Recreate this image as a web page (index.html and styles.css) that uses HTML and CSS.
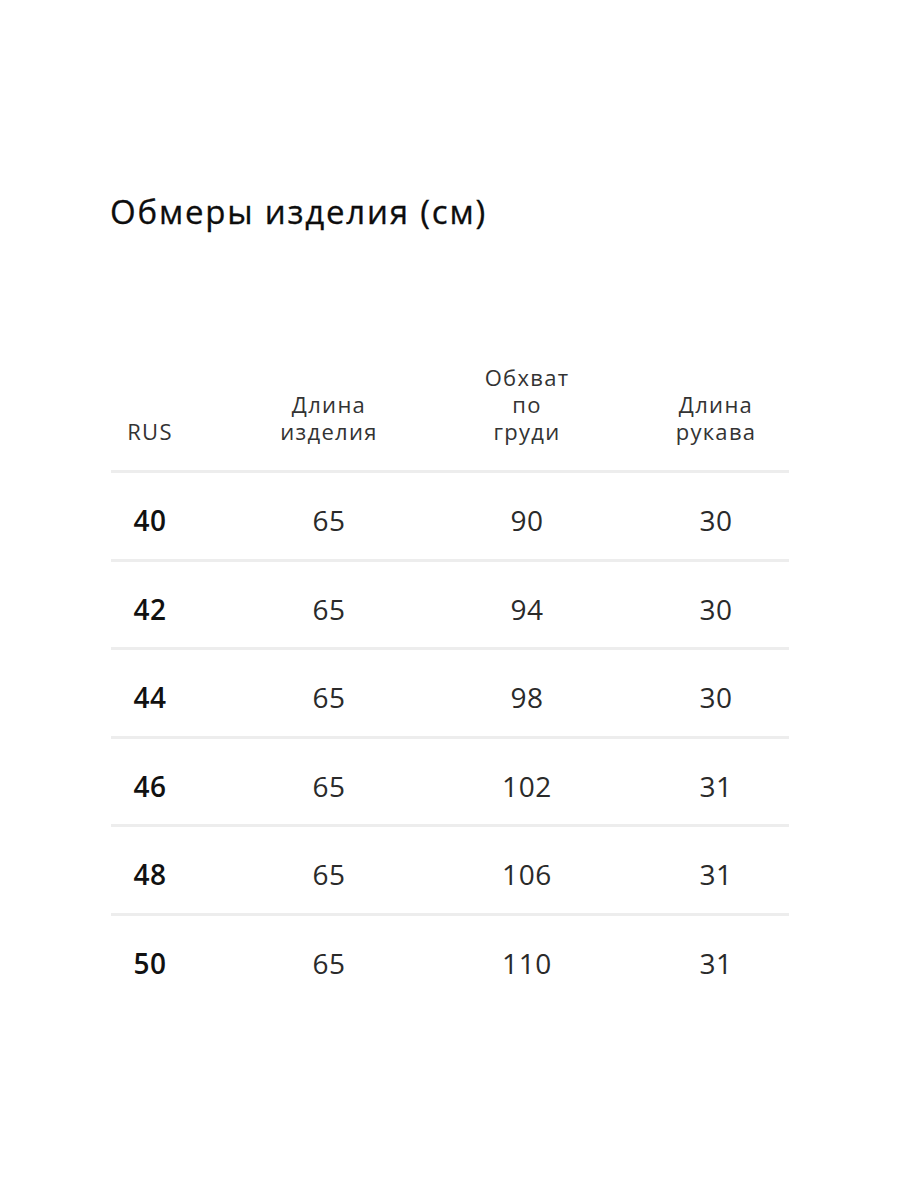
FILE: index.html
```html
<!DOCTYPE html>
<html lang="ru">
<head>
<meta charset="utf-8">
<link rel="stylesheet" href="styles.css">
</head>
<body>
<main class="page">
  <h1 class="title">Обмеры изделия (см)</h1>
  <div class="table">
    <div class="row head">
      <div class="cell c1"><span class="line">RUS</span></div>
      <div class="cell c2"><span class="line">Длина</span><span class="line">изделия</span></div>
      <div class="cell c3"><span class="line">Обхват</span><span class="line">по</span><span class="line">груди</span></div>
      <div class="cell c4"><span class="line">Длина</span><span class="line">рукава</span></div>
    </div>
    <div class="row data"><div class="cell c1 size">40</div><div class="cell c2">65</div><div class="cell c3">90</div><div class="cell c4">30</div></div>
    <div class="row data"><div class="cell c1 size">42</div><div class="cell c2">65</div><div class="cell c3">94</div><div class="cell c4">30</div></div>
    <div class="row data"><div class="cell c1 size">44</div><div class="cell c2">65</div><div class="cell c3">98</div><div class="cell c4">30</div></div>
    <div class="row data"><div class="cell c1 size">46</div><div class="cell c2">65</div><div class="cell c3">102</div><div class="cell c4">31</div></div>
    <div class="row data"><div class="cell c1 size">48</div><div class="cell c2">65</div><div class="cell c3">106</div><div class="cell c4">31</div></div>
    <div class="row data"><div class="cell c1 size">50</div><div class="cell c2">65</div><div class="cell c3">110</div><div class="cell c4">31</div></div>
  </div>
</main>
</body>
</html>
```

FILE: styles.css
```css
html, body {
  margin: 0;
  padding: 0;
  background: #ffffff;
}

body {
  font-family: "Open Sans", "Noto Sans", "DejaVu Sans", sans-serif;
  color: #222222;
}

.page {
  width: 678px;
  padding: 192px 0 0 110px;
}

.title {
  margin: 0;
  font-size: 33px;
  line-height: 40px;
  font-weight: 400;
  color: #0d0d0d;
  letter-spacing: 1.8px;
  -webkit-text-stroke: 0.3px #0d0d0d;
}

.table {
  margin-top: 132px;
  margin-left: 1px;
  width: 678px;
}

.row {
  display: grid;
  grid-template-columns: 78px 280px 116px 204px;
}

.cell {
  text-align: center;
  white-space: nowrap;
}

.c4 {
  padding-left: 58px;
}

.head {
  align-items: end;
  padding-bottom: 25px;
  font-size: 22px;
  color: #333333;
  letter-spacing: 1.3px;
}

.line {
  display: block;
  height: 27px;
  line-height: 27px;
}

.data {
  border-top: 3px solid #ededed;
  padding: 30px 0 21.5px;
  font-size: 28px;
  line-height: 34px;
  color: #2a2a2a;
  letter-spacing: 0.6px;
}

.size {
  font-weight: 600;
  color: #111111;
}
```
